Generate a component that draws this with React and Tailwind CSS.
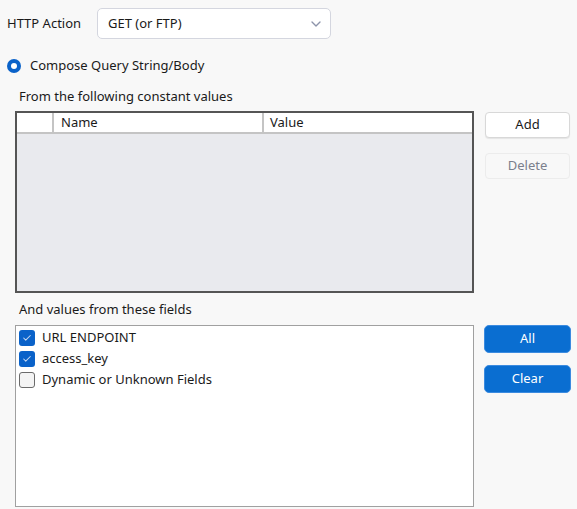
import React from 'react';
import { ChevronDown, Check } from 'lucide-react';

const fields = [
  { label: 'URL ENDPOINT', checked: true },
  { label: 'access_key', checked: true },
  { label: 'Dynamic or Unknown Fields', checked: false },
];

export default function App() {
  return (
    <div
      className="w-[577px] h-[509px] bg-[#f8f8f8] text-[#1a1a1a] text-[13px] overflow-hidden"
      style={{ fontFamily: '"Noto Sans", "Open Sans", sans-serif' }}
    >
      {/* HTTP action */}
      <div className="flex items-center pt-[8px] pl-[7px]">
        <span className="w-[90px]">HTTP Action</span>
        <div className="w-[234px] h-[31px] bg-white border border-[#d4d6df] rounded-[5px] flex items-center justify-between pl-[10px] pr-[6px]">
          <span>GET (or FTP)</span>
          <ChevronDown className="w-4 h-4 text-[#8c93aa]" strokeWidth={2} />
        </div>
      </div>

      {/* Radio */}
      <div className="flex items-center mt-[20px] pl-[7px] h-[14px]">
        <div className="w-[14px] h-[14px] rounded-full bg-[#0a62c9] flex items-center justify-center">
          <div className="w-[6px] h-[6px] rounded-full bg-white" />
        </div>
        <span className="ml-[9px]">Compose Query String/Body</span>
      </div>

      {/* Constant values */}
      <div className="pl-[19px] mt-[15px] leading-[17px]">From the following constant values</div>
      <div className="flex pl-[15px] mt-[6px]">
        <div className="w-[459px] h-[182px] border-2 border-[#555] bg-[#e9eaee] flex flex-col">
          <div className="h-[21px] bg-white border-b-2 border-[#c4c4c4] flex">
            <div className="w-[37px] border-r-2 border-[#c4c4c4]" />
            <div className="w-[210px] border-r-2 border-[#c4c4c4] pl-[7px] leading-[19px]">Name</div>
            <div className="flex-1 pl-[6px] leading-[19px]">Value</div>
          </div>
        </div>
        <div className="ml-[11px] flex flex-col gap-[15px] pt-[1px]">
          <button className="w-[85px] h-[26px] bg-white border border-[#d8d8d8] rounded-[4px] shadow-[0_1px_1px_rgba(0,0,0,0.08)]">
            Add
          </button>
          <button className="w-[85px] h-[26px] bg-[#f8f8f8] border border-[#ececec] rounded-[4px] text-[#7b7f8c]">
            Delete
          </button>
        </div>
      </div>

      {/* Fields */}
      <div className="pl-[19px] mt-[8px] leading-[17px]">And values from these fields</div>
      <div className="flex pl-[15px] mt-[7px]">
        <div className="w-[459px] h-[182px] border border-[#a0a0a0] bg-white pt-[1px] pl-[3px]">
          {fields.map((f) => (
            <div key={f.label} className="flex items-center h-[21px]">
              {f.checked ? (
                <div className="w-[16px] h-[16px] rounded-[3px] bg-[#0a62c9] flex items-center justify-center">
                  <Check className="w-[10px] h-[10px] text-[#c7d9f2]" strokeWidth={2.5} />
                </div>
              ) : (
                <div className="w-[16px] h-[16px] rounded-[3px] border border-[#6b6b6b] bg-[#f4f4f4]" />
              )}
              <span className="ml-[7px]">{f.label}</span>
            </div>
          ))}
        </div>
        <div className="ml-[10px] flex flex-col gap-[12px]">
          <button className="w-[87px] h-[28px] bg-[#0a6ed1] border border-[#3b8be0] rounded-[5px] text-white">
            All
          </button>
          <button className="w-[87px] h-[28px] bg-[#0a6ed1] border border-[#3b8be0] rounded-[5px] text-white">
            Clear
          </button>
        </div>
      </div>
    </div>
  );
}
